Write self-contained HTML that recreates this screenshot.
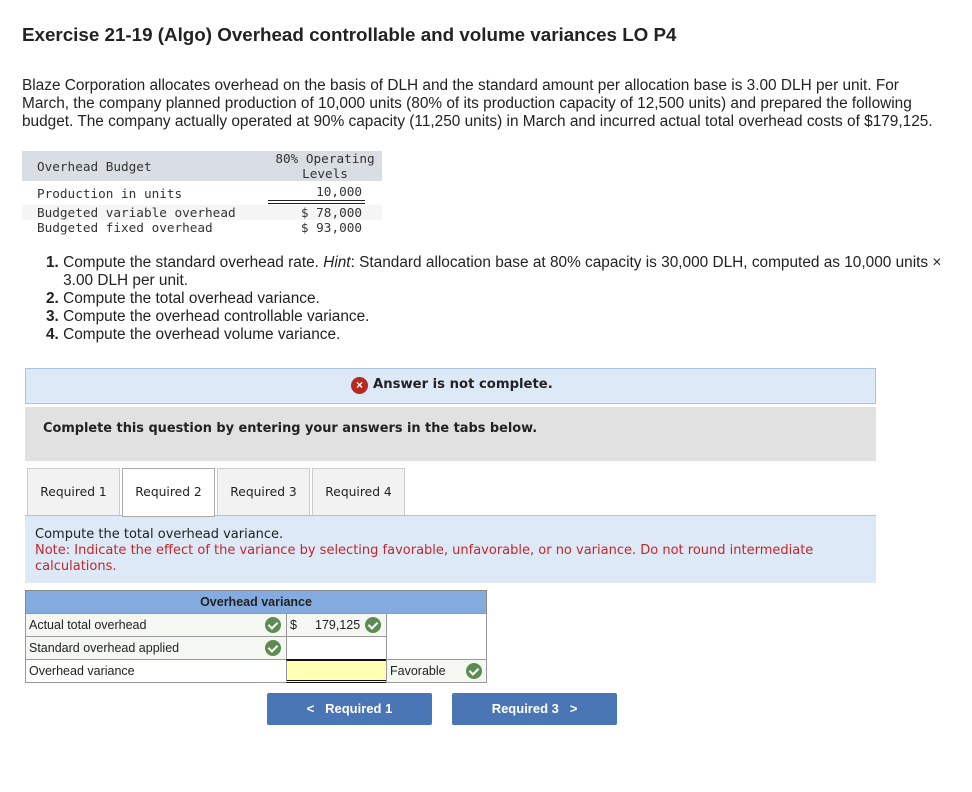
<!DOCTYPE html>
<html><head><meta charset="utf-8"><style>
*{margin:0;padding:0;box-sizing:border-box}
body{width:972px;height:792px;background:#fff;font-family:"Liberation Sans",sans-serif;color:#222;position:relative;overflow:hidden}
.a{position:absolute}
h1{position:absolute;left:22px;top:24px;font-size:18.8px;font-weight:bold;color:#222}
.p{left:22px;top:77px;width:922px;font-size:15.4px;line-height:18px}
.mono{font-family:"DejaVu Sans Mono","Liberation Mono",monospace;font-size:12.7px;color:#333}
ol{position:absolute;left:46px;top:254px;font-size:15.4px;line-height:18px;list-style:none;width:926px}
.v{font-family:"DejaVu Sans",Verdana,sans-serif}
.tab{position:absolute;top:468px;height:48px;background:#f2f2f2;border:1px solid #ccc;font-family:"DejaVu Sans",sans-serif;font-size:12.3px;text-align:center;line-height:46px;color:#222}
.chk{display:inline-block;width:16px;height:16px;border-radius:50%;background:#5d8c52;position:absolute}
.chk:after{content:"";position:absolute;left:5px;top:3px;width:4px;height:7px;border:solid #fff;border-width:0 2px 2px 0;transform:rotate(45deg)}
.cell{position:absolute;border:1px solid #999;font-size:12.5px;line-height:22px;padding-left:3px}
.btn{position:absolute;top:693px;height:32px;background:#4a76b6;color:#fff;font-weight:bold;font-size:13px;text-align:center;line-height:32px;border-radius:2px}
</style></head><body>
<h1>Exercise 21-19 (Algo) Overhead controllable and volume variances LO P4</h1>
<div class="a p">Blaze Corporation allocates overhead on the basis of DLH and the standard amount per allocation base is 3.00 DLH per unit. For March, the company planned production of 10,000 units (80% of its production capacity of 12,500 units) and prepared the following budget. The company actually operated at 90% capacity (11,250 units) in March and incurred actual total overhead costs of $179,125.</div>

<div class="a" style="left:22px;top:151px;width:360px;height:30px;background:#d9dde4"></div>
<div class="a" style="left:22px;top:205px;width:360px;height:15px;background:#f5f5f5"></div>
<div class="a mono" style="left:37px;top:159px">Overhead Budget</div>
<div class="a mono" style="left:270px;top:151px;width:110px;text-align:center;line-height:15px">80% Operating<br>Levels</div>
<div class="a mono" style="left:37px;top:186px">Production in units</div>
<div class="a mono" style="left:262px;top:184px;width:100px;text-align:right">10,000</div>
<div class="a" style="left:268px;top:200px;width:97px;height:4px;border-top:1px solid #222;border-bottom:1px solid #222"></div>
<div class="a mono" style="left:37px;top:205px">Budgeted variable overhead</div>
<div class="a mono" style="left:262px;top:205px;width:100px;text-align:right">$ 78,000</div>
<div class="a mono" style="left:37px;top:220px">Budgeted fixed overhead</div>
<div class="a mono" style="left:262px;top:220px;width:100px;text-align:right">$ 93,000</div>

<ol>
<li><b>1.</b> Compute the standard overhead rate. <i>Hint</i>: Standard allocation base at 80% capacity is 30,000 DLH, computed as 10,000 units ×<br>&nbsp;&nbsp;&nbsp;&nbsp;3.00 DLH per unit.</li>
<li><b>2.</b> Compute the total overhead variance.</li>
<li><b>3.</b> Compute the overhead controllable variance.</li>
<li><b>4.</b> Compute the overhead volume variance.</li>
</ol>

<div class="a" style="left:25px;top:368px;width:851px;height:36px;background:#dde9f6;border:1px solid #a9c3e0"></div>
<div class="a" style="left:351px;top:377px;width:17px;height:17px;border-radius:50%;background:#b62a1f;color:#fff;font-size:12px;text-align:center;line-height:17px;font-weight:bold">×</div>
<div class="a v" style="left:373px;top:377px;font-size:13.2px;font-weight:bold">Answer is not complete.</div>
<div class="a" style="left:25px;top:407px;width:851px;height:54px;background:#e1e1e1"></div>
<div class="a v" style="left:43px;top:421px;font-size:12.9px;font-weight:bold">Complete this question by entering your answers in the tabs below.</div>

<div class="tab" style="left:27px;width:93px">Required 1</div>
<div class="tab" style="left:122px;width:93px;background:#fff;border-color:#aaa;height:49px;z-index:2">Required 2</div>
<div class="tab" style="left:217px;width:93px">Required 3</div>
<div class="tab" style="left:312px;width:93px">Required 4</div>
<div class="a" style="left:25px;top:515px;width:851px;height:68px;background:#dde9f6;border-top:1px solid #a9c3e0"></div>
<div class="a v" style="left:35px;top:527px;font-size:13px;color:#222">Compute the total overhead variance.</div>
<div class="a v" style="left:35px;top:543px;width:830px;font-size:13px;line-height:16px;color:#c0282a">Note: Indicate the effect of the variance by selecting favorable, unfavorable, or no variance. Do not round intermediate calculations.</div>

<div class="a" style="left:25px;top:590px;width:462px;height:24px;background:#84abdf;border:1px solid #888;text-align:center;font-weight:bold;font-size:12.5px;line-height:22px;color:#222">Overhead variance</div>
<div class="cell" style="left:25px;top:613px;width:262px;height:24px;background:#f5f7f2">Actual total overhead</div>
<div class="cell" style="left:286px;top:613px;width:101px;height:24px;background:#f5f7f2">$<span style="position:absolute;left:28px">179,125</span></div>
<div class="cell" style="left:386px;top:613px;width:101px;height:47px;background:#fff"></div>
<div class="cell" style="left:25px;top:636px;width:262px;height:24px;background:#f5f7f2">Standard overhead applied</div>
<div class="cell" style="left:286px;top:636px;width:101px;height:24px;background:#fff"></div>
<div class="cell" style="left:25px;top:659px;width:262px;height:24px;background:#fff">Overhead variance</div>
<div class="cell" style="left:286px;top:659px;width:101px;height:24px;background:#ffffb4;border-top:2px solid #111;border-bottom:3px double #111"></div>
<div class="cell" style="left:386px;top:659px;width:101px;height:24px;background:#f5f7f2">Favorable</div>
<span class="chk" style="left:265px;top:617px"></span>
<span class="chk" style="left:365px;top:617px"></span>
<span class="chk" style="left:265px;top:640px"></span>
<span class="chk" style="left:466px;top:663px"></span>

<div class="btn" style="left:267px;width:165px">&lt;&nbsp;&nbsp;&nbsp;Required 1</div>
<div class="btn" style="left:452px;width:165px">Required 3&nbsp;&nbsp;&nbsp;&gt;</div>
</body></html>
